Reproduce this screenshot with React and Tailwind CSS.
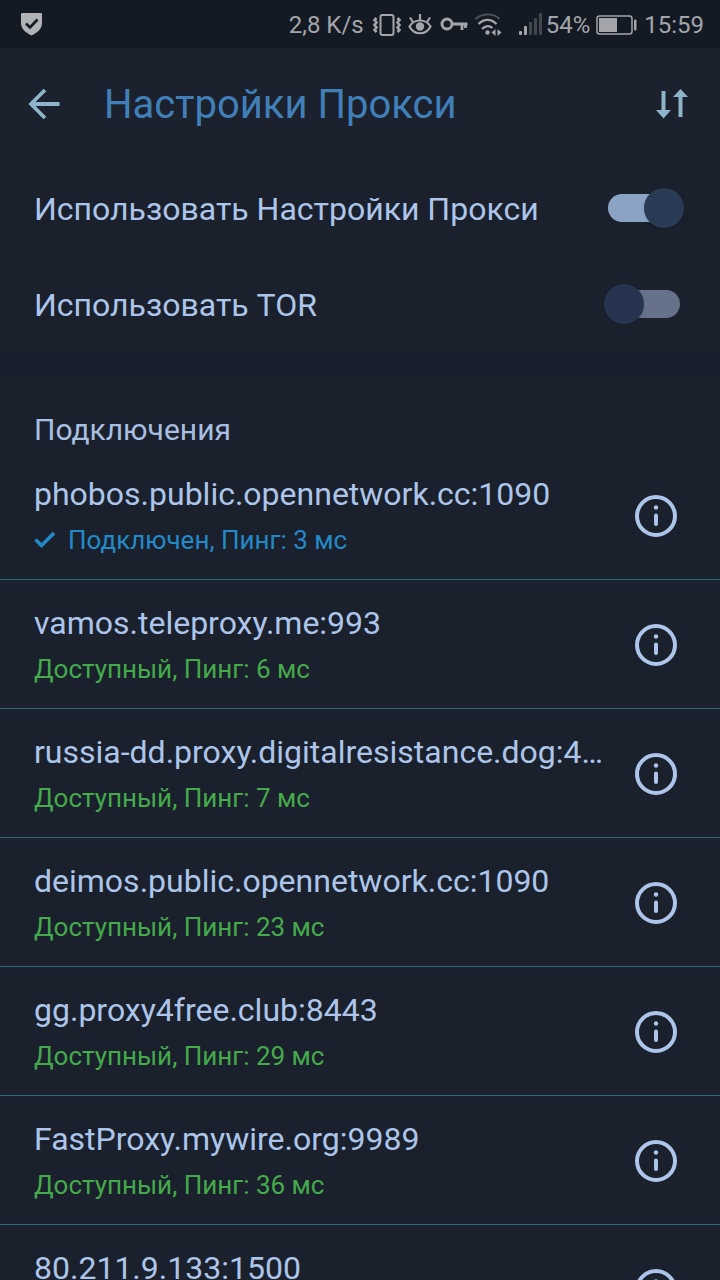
import React, { useState } from "react";

const proxies = [
  { address: "phobos.public.opennetwork.cc:1090", ping: 3, connected: true },
  { address: "vamos.teleproxy.me:993", ping: 6 },
  { address: "russia-dd.proxy.digitalresistance.dog:443", ping: 7 },
  { address: "deimos.public.opennetwork.cc:1090", ping: 23 },
  { address: "gg.proxy4free.club:8443", ping: 29 },
  { address: "FastProxy.mywire.org:9989", ping: 36 },
  { address: "80.211.9.133:1500", ping: 41 },
];

const StatusBar = () => {
  return (
    <div className="flex h-12 shrink-0 items-center justify-between bg-[#141a24] pl-5 pr-4 pt-0.5 text-[24px] text-[#a3a5aa]">
      <svg width="24" height="26" viewBox="0 0 24 26" aria-hidden="true">
        <path d="M1 2Q1 1 2 1H21Q22 1 22 2V11C22 17 17 21 11.500 23.500C6 21 1 17 1 11Z" fill="#b0b2b5" />
        <path d="M6 11.500L10 15.500L17.500 7.500" fill="none" stroke="#141a24" strokeWidth="2.600" />
      </svg>
      <div className="flex items-center">
        <span>2,8 K/s</span>
        <svg className="ml-2" width="30" height="24" viewBox="0 0 30 24" fill="none" stroke="currentColor" strokeWidth="2" aria-hidden="true">
          <rect x="8.500" y="2" width="13" height="20" rx="2" />
          <path d="M4.500 5L2.500 7L4.500 9.500L2.500 12L4.500 14.500L2.500 17L4.500 19M25.500 5L27.500 7L25.500 9.500L27.500 12L25.500 14.500L27.500 17L25.500 19" strokeWidth="2.600" />
        </svg>
        <svg className="ml-1.5" width="24" height="24" viewBox="0 0 24 24" fill="none" stroke="currentColor" strokeWidth="2.200" aria-hidden="true">
          <path d="M1.500 13.500C6 5.500 18 5.500 22.500 13.500C18 22.500 6 22.500 1.500 13.500Z" />
          <path d="M12 7V1M5 9L2 4.500M19 9L22 4.500" />
          <circle cx="12" cy="13.500" r="4.200" fill="currentColor" stroke="none" />
        </svg>
        <svg className="ml-2" width="28" height="24" viewBox="0 0 28 24" fill="none" stroke="currentColor" aria-hidden="true">
          <circle cx="7" cy="11" r="5" strokeWidth="3" />
          <path d="M12 11H27.500M22 11V17M25.500 11V15" strokeWidth="2.800" />
        </svg>
        <svg className="ml-1.5" width="28" height="24" viewBox="0 0 28 24" fill="none" stroke="currentColor" strokeWidth="2.200" aria-hidden="true">
          <path d="M1.500 6C8 0 20 0 25.500 6" stroke="#4b5059" />
          <path d="M4.500 11C10 5.500 17 5.500 22.500 11M8 16C12 12 15 12 18.500 15" />
          <circle cx="13.500" cy="19.500" r="2.200" fill="currentColor" stroke="none" />
          <path d="M17.500 19.500L21.500 16V23ZM27.500 19.500L23.500 16V23Z" fill="currentColor" stroke="none" />
        </svg>
        <svg className="ml-4" width="24" height="24" viewBox="0 0 24 24" fill="currentColor" aria-hidden="true">
          <rect x="1" y="18" width="3" height="4" rx="1" />
          <rect x="6" y="13" width="3" height="9" rx="1" />
          <rect x="11" y="9" width="3" height="13" rx="1" fill="#41464f" />
          <rect x="16" y="5" width="3" height="17" rx="1" fill="#41464f" />
          <rect x="21" y="0" width="3" height="22" rx="1" fill="#41464f" />
        </svg>
        <span className="ml-1">54%</span>
        <svg className="ml-1.5" width="42" height="20" viewBox="0 0 42 20" fill="currentColor" aria-hidden="true">
          <rect x="1" y="1" width="35" height="18" rx="2.500" fill="none" stroke="currentColor" strokeWidth="1.500" />
          <rect x="3" y="3" width="18" height="14" />
          <rect x="38" y="4.500" width="2.500" height="11" rx="1" />
        </svg>
        <span className="ml-1.5">15:59</span>
      </div>
    </div>
  );
};

const Header = () => {
  return (
    <header className="flex h-28 shrink-0 items-center border-b border-[#181e28] bg-[#1b212d] px-7 text-[#8fb3c8]">
      <button type="button" aria-label="Назад">
        <svg width="32" height="32" viewBox="0 0 32 32" fill="none" stroke="currentColor" strokeWidth="3.800" aria-hidden="true">
          <path d="M31.500 16H3M17 2L3 16L17 30" />
        </svg>
      </button>
      <h1 className="ml-11 min-w-0 flex-1 truncate pt-0.5 text-[40px] leading-12 text-[#407fb8]">Настройки Прокси</h1>
      <button type="button" aria-label="Сортировка">
        <svg width="36" height="32" viewBox="0 0 36 32" fill="currentColor" aria-hidden="true">
          <path d="M5.500 3H9.500V22H15L7.500 30.500L0 22H5.500ZM22.500 29V9H17L24.500 1L32 9H26.500V29Z" />
        </svg>
      </button>
    </header>
  );
};

const Toggle = ({ label, defaultChecked }) => {
  const [checked, setChecked] = useState(defaultChecked);
  return (
    <label className="flex h-24 items-center justify-between pl-[34px] pr-9">
      <span className="pt-0.5 text-[32px] leading-10">{label}</span>
      <span className="relative flex h-10 w-20 items-center px-1">
        <input
          type="checkbox"
          role="switch"
          checked={checked}
          onChange={(e) => setChecked(e.target.checked)}
          className="peer h-7 w-full appearance-none rounded-full bg-[#66718a] checked:bg-[#8ba4c6]"
        />
        <span className="pointer-events-none absolute left-0 size-10 rounded-full bg-[#26344f] shadow-sm peer-checked:left-10 peer-checked:bg-[#293a55]" />
      </span>
    </label>
  );
};

const ProxyRow = ({ address, ping, connected }) => {
  return (
    <li className="flex items-center border-b border-[#2a6a70] pb-[22px] pl-[34px] pr-[42px] pt-6">
      <div className="min-w-0 flex-1">
        <div className="truncate text-[32px] leading-[38px]">{address}</div>
        {connected ? (
          <div className="mt-2.5 flex items-center text-[26px] leading-[34px] text-[#2489c9]">
            <svg className="mr-3" width="22" height="20" viewBox="0 0 22 20" fill="none" stroke="currentColor" strokeWidth="3.600" aria-hidden="true">
              <path d="M1.500 9.500L7.500 15.500L20 3" />
            </svg>
            Подключен, Пинг: {ping} мс
          </div>
        ) : (
          <div className="mt-2.5 text-[26px] leading-[34px] text-[#45aa4b]">Доступный, Пинг: {ping} мс</div>
        )}
      </div>
      <button type="button" aria-label={"Сведения: " + address} className="ml-7">
        <svg width="44" height="42" viewBox="0 0 44 42" fill="none" stroke="currentColor" strokeWidth="4" aria-hidden="true">
          <circle cx="22" cy="21" r="19" />
          <circle cx="22" cy="12.500" r="2.200" fill="currentColor" stroke="none" />
          <path d="M22 20.500V29" strokeLinecap="round" />
        </svg>
      </button>
    </li>
  );
};

const App = () => {
  return (
    <div className="flex h-screen flex-col overflow-hidden bg-[#1a212c] font-['Roboto',sans-serif] text-[#adc5ea]">
      <StatusBar />
      <Header />
      <main className="min-h-0 flex-1 overflow-hidden">
        <Toggle label="Использовать Настройки Прокси" defaultChecked={true} />
        <Toggle label="Использовать TOR" defaultChecked={false} />
        <div className="h-6 bg-[#171e2d]" />
        <h2 className="px-[34px] pb-[3px] pt-9 text-[30px] leading-9 text-[#a8bfe2]">Подключения</h2>
        <ul>
          {proxies.map((proxy) => (
            <ProxyRow key={proxy.address} {...proxy} />
          ))}
        </ul>
      </main>
    </div>
  );
};

export default App;
